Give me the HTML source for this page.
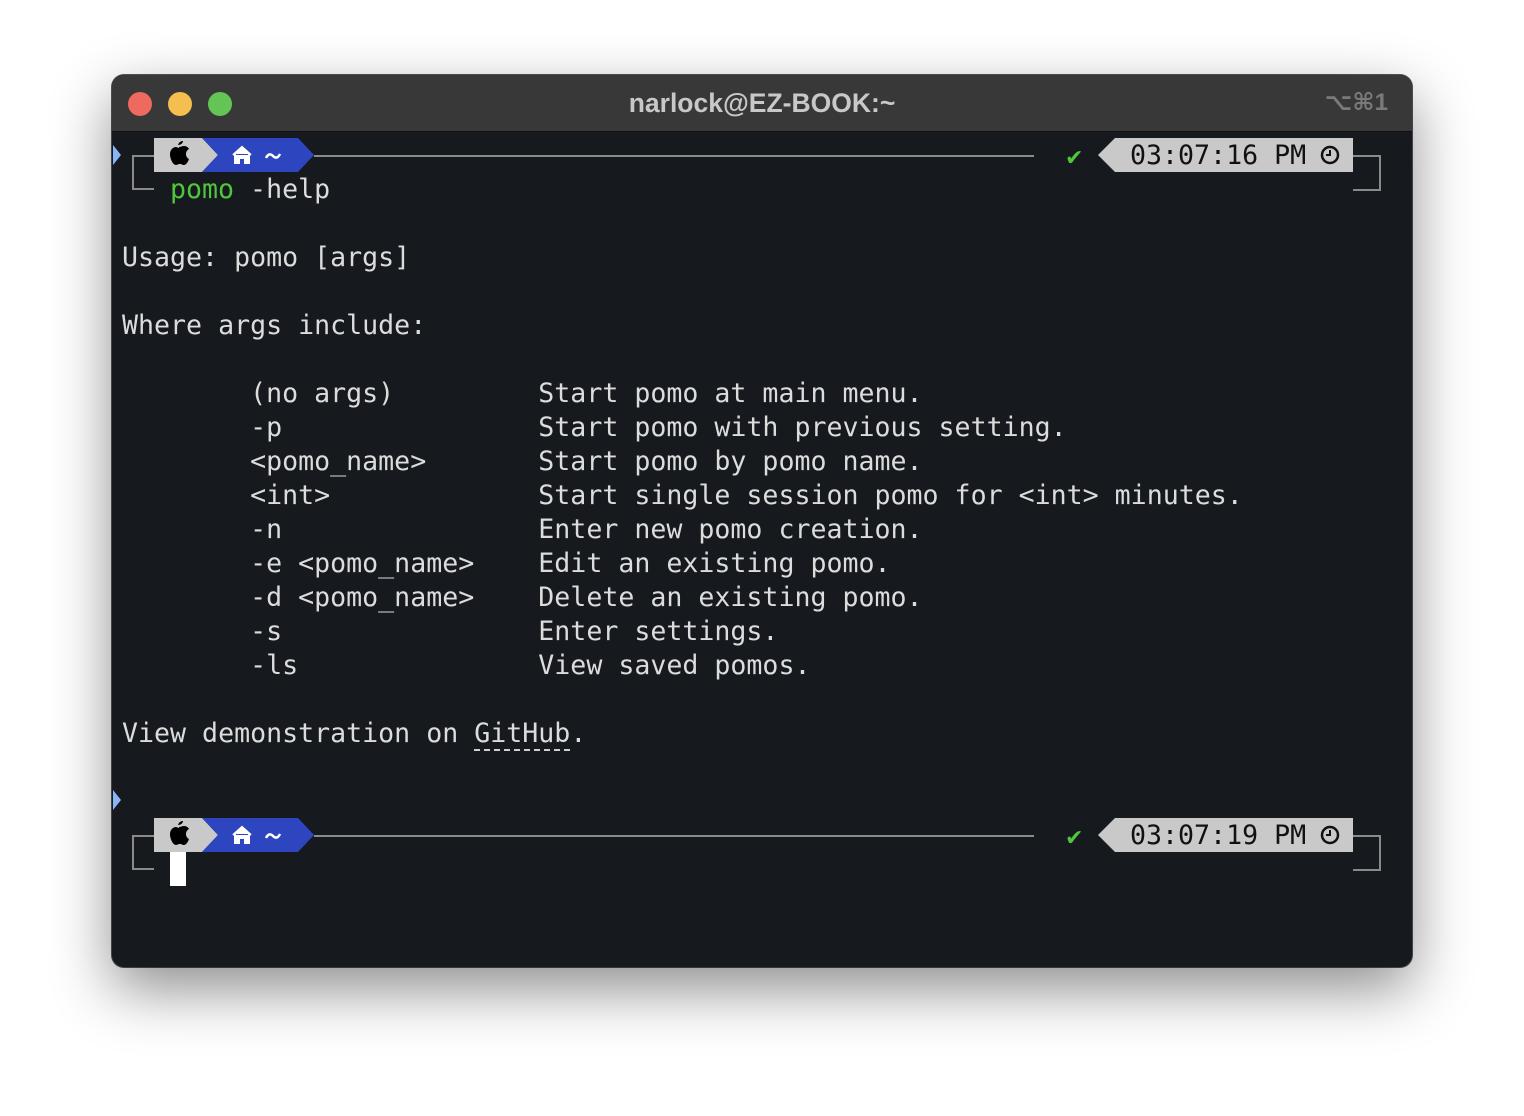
<!DOCTYPE html>
<html><head><style>
*{margin:0;padding:0;box-sizing:border-box}
body{width:1524px;height:1116px;background:#fff;position:relative;overflow:hidden;font-family:"DejaVu Sans Mono","Liberation Mono",monospace}
.win{position:absolute;left:112px;top:75px;width:1300px;height:892px;border-radius:12px;background:#16191e;box-shadow:0 22px 60px rgba(0,0,0,.45),0 0 0 1px #555;overflow:hidden}
.tb{position:absolute;left:0;top:0;width:1300px;height:57px;background:#383838;border-bottom:1px solid #111}
.dot{position:absolute;top:17px;width:24px;height:24px;border-radius:50%}
.title{position:absolute;left:0;width:1300px;top:13px;text-align:center;font:bold 26.5px "Liberation Sans",sans-serif;color:#c8c8c8}
.sc{position:absolute;right:24px;top:13px;font:bold 24px "Liberation Sans","DejaVu Sans",sans-serif;color:#7a7a7a}
.t{position:absolute;left:10px;font-size:26.6px;line-height:34px;color:#dcdcdc;white-space:pre}
.g{color:#4fc63c}
</style></head><body>
<div class="win">
<div class="tb">
<div class="dot" style="left:16px;background:#ee6a5f"></div>
<div class="dot" style="left:56px;background:#f5bf4f"></div>
<div class="dot" style="left:96px;background:#62c554"></div>
<div class="title">narlock@EZ-BOOK:~</div>
<div class="sc">⌥⌘1</div>
</div>

<svg width="1300" height="892" style="position:absolute;left:0;top:0" font-family="DejaVu Sans Mono">
<g id="p1">
<polygon points="1,70 9,80 1,90" fill="#8ab4f8"/>
<path d="M42,81 H21 V114 H42" fill="none" stroke="#8a8a8a" stroke-width="2"/>
<polygon points="42,63 90,63 106,80 90,97 42,97" fill="#c9c9c9"/>
<polygon points="90,63 186,63 202,80 186,97 90,97 106,80" fill="#2e45c0"/>
<path transform="translate(0,2)" d="M66,68 c1,-3 3,-4 5,-4 c0,2 -2,4 -5,4z M67,70 c2,0 3,-1 5,-1 c2,0 4,1 5,3 c-2,1 -3,3 -3,5 c0,2 1,4 3,5 c-1,3 -3,6 -5,6 c-2,0 -2,-1 -4,-1 c-2,0 -3,1 -4,1 c-3,0 -6,-6 -6,-11 c0,-4 3,-7 6,-7 c1,0 2,1 3,1z" fill="#000"/>
<path d="M121,80 l9,-8 9,8 M123,79 v9 h4 v-5 h6 v5 h4 v-9" fill="#fff" stroke="#fff" stroke-width="2"/>
<path d="M154,83 q3,-6 7,-2 q4,4 7,-2" fill="none" stroke="#fff" stroke-width="2.5"/>
<line x1="202" y1="81" x2="922" y2="81" stroke="#8a8a8a" stroke-width="2"/>
<text x="953" y="90" font-size="22" fill="#4fc63c" font-family="DejaVu Sans">✔</text>
<polygon points="986,80 1003,63 1241,63 1241,97 1003,97" fill="#c9c9c9"/>
<text x="1018" y="89" font-size="26.6" fill="#111">03:07:16 PM</text>
<circle cx="1218" cy="80" r="8" fill="none" stroke="#111" stroke-width="2.5"/>
<path d="M1218,75 v5 h-4" fill="none" stroke="#111" stroke-width="2"/>
<path d="M1241,81 H1268 V115 H1241" fill="none" stroke="#8a8a8a" stroke-width="2"/>
</g>
<g transform="translate(0,680)">
<polygon points="1,70 9,80 1,90" fill="#8ab4f8" transform="translate(0,-35)"/>
<path d="M42,81 H21 V114 H42" fill="none" stroke="#8a8a8a" stroke-width="2"/>
<polygon points="42,63 90,63 106,80 90,97 42,97" fill="#c9c9c9"/>
<polygon points="90,63 186,63 202,80 186,97 90,97 106,80" fill="#2e45c0"/>
<path transform="translate(0,2)" d="M66,68 c1,-3 3,-4 5,-4 c0,2 -2,4 -5,4z M67,70 c2,0 3,-1 5,-1 c2,0 4,1 5,3 c-2,1 -3,3 -3,5 c0,2 1,4 3,5 c-1,3 -3,6 -5,6 c-2,0 -2,-1 -4,-1 c-2,0 -3,1 -4,1 c-3,0 -6,-6 -6,-11 c0,-4 3,-7 6,-7 c1,0 2,1 3,1z" fill="#000"/>
<path d="M121,80 l9,-8 9,8 M123,79 v9 h4 v-5 h6 v5 h4 v-9" fill="#fff" stroke="#fff" stroke-width="2"/>
<path d="M154,83 q3,-6 7,-2 q4,4 7,-2" fill="none" stroke="#fff" stroke-width="2.5"/>
<line x1="202" y1="81" x2="922" y2="81" stroke="#8a8a8a" stroke-width="2"/>
<text x="953" y="90" font-size="22" fill="#4fc63c" font-family="DejaVu Sans">✔</text>
<polygon points="986,80 1003,63 1241,63 1241,97 1003,97" fill="#c9c9c9"/>
<text x="1018" y="89" font-size="26.6" fill="#111">03:07:19 PM</text>
<circle cx="1218" cy="80" r="8" fill="none" stroke="#111" stroke-width="2.5"/>
<path d="M1218,75 v5 h-4" fill="none" stroke="#111" stroke-width="2"/>
<path d="M1241,81 H1268 V115 H1241" fill="none" stroke="#8a8a8a" stroke-width="2"/>
<rect x="58" y="97" width="16" height="34" fill="#fff"/>
</g>
</svg>

<div class="t" style="top:98px;left:58px"><span class="g">pomo</span> -help</div>
<div class="t" style="top:166px">Usage: pomo [args]</div>
<div class="t" style="top:234px">Where args include:</div>
<div class="t" style="top:302px">        (no args)         Start pomo at main menu.
        -p                Start pomo with previous setting.
        &lt;pomo_name&gt;       Start pomo by pomo name.
        &lt;int&gt;             Start single session pomo for &lt;int&gt; minutes.
        -n                Enter new pomo creation.
        -e &lt;pomo_name&gt;    Edit an existing pomo.
        -d &lt;pomo_name&gt;    Delete an existing pomo.
        -s                Enter settings.
        -ls               View saved pomos.</div>
<div class="t" style="top:642px">View demonstration on <span style="border-bottom:2px dashed #cfcfcf">GitHub</span>.</div>
</div>
</body></html>
